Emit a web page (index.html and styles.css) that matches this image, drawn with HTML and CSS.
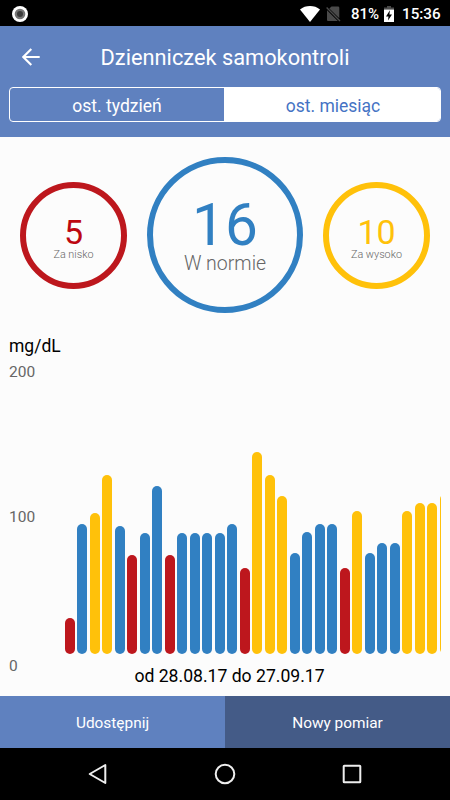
FILE: index.html
```
<!DOCTYPE html>
<html lang="pl">
<head>
    <meta charset="UTF-8">
    <meta name="viewport" content="width=device-width, initial-scale=1.0">
    <title>Dzienniczek samokontroli</title>
    <link rel="stylesheet" href="styles.css">
</head>
<body>
    <!-- Status bar -->
    <div class="status-bar">
        <svg class="status-dot" width="16" height="16" viewBox="0 0 16 16">
            <circle cx="8" cy="8" r="8" fill="#fff"/>
            <circle cx="8" cy="8" r="5.3" fill="#777"/>
            <circle cx="8" cy="8" r="3" fill="#3c3c3c"/>
        </svg>
        <svg class="wifi" width="20" height="16" viewBox="0 0 20 16">
            <path d="M0 3.4C5.6-1.1 14.4-1.1 20 3.4L10 16z" fill="#fff"/>
        </svg>
        <svg class="no-sim" width="15" height="16" viewBox="0 0 15 16">
            <path d="M5.5 .5H12a1.3 1.3 0 0 1 1.3 1.3v10.4L3.3 2.600zM1 4.200L11.800 15H2a1 1 0 0 1-1-1z" fill="#4a4a4a"/>
            <path d="M.6 1.600L14 15" stroke="#4a4a4a" stroke-width="1.400"/>
        </svg>
        <span class="percent">81%</span>
        <svg class="battery" width="10" height="16" viewBox="0 0 10 16">
            <path d="M3 0h4v1.500h3V4H0V1.500h3z" fill="#4a4a4a"/>
            <path d="M0 3.600h10V16H0z" fill="#fff"/>
            <path d="M5.900 4.300L2 10.400h2.500L4 14.600l4-6.100H5.400z" fill="#000"/>
        </svg>
        <span class="clock">15:36</span>
    </div>

    <!-- Header with period switch -->
    <div class="header">
        <div class="title-row">
            <svg class="back" width="18" height="18" viewBox="0 0 18 18">
                <path d="M17.700 9H1.300M9.300 1L1.300 9l8 8" fill="none" stroke="#fff" stroke-width="2.100"/>
            </svg>
            <h1>Dzienniczek samokontroli</h1>
        </div>
        <div class="tabs">
            <div class="tab">ost. tydzień</div>
            <div class="tab active">ost. miesiąc</div>
        </div>
    </div>

    <!-- Summary circles -->
    <div class="summary">
        <div class="circle low">
            <span class="number">5</span>
            <span class="label">Za nisko</span>
        </div>
        <div class="circle normal">
            <span class="number">16</span>
            <span class="label">W normie</span>
        </div>
        <div class="circle high">
            <span class="number">10</span>
            <span class="label">Za wysoko</span>
        </div>
    </div>

    <!-- Chart -->
    <div class="chart">
        <div class="unit">mg/dL</div>
        <div class="plot">
            <div class="axis">
                <span>200</span>
                <span>100</span>
                <span>0</span>
            </div>
            <div class="bars" id="bars"></div>
        </div>
        <div class="range">od 28.08.17 do 27.09.17</div>
    </div>

    <!-- Actions -->
    <div class="actions">
        <div class="action share">Udostępnij</div>
        <div class="action add">Nowy pomiar</div>
    </div>

    <div class="nav-bar">
        <svg width="20" height="22" viewBox="0 0 20 22">
            <path d="M17.300 2v18L1.700 11z" fill="none" stroke="#eee" stroke-width="2" stroke-linejoin="round"/>
        </svg>
        <svg width="22" height="22" viewBox="0 0 22 22">
            <circle cx="11" cy="11" r="9.300" fill="none" stroke="#eee" stroke-width="2"/>
        </svg>
        <svg width="20" height="22" viewBox="0 0 20 22">
            <rect x="1.700" y="2.700" width="16.600" height="16.600" rx=".6" fill="none" stroke="#eee" stroke-width="2"/>
        </svg>
    </div>

    <script>
        // Bar height in px and level for each day
        const days = [
            [36, 'low'], [130, 'normal'], [141.5, 'high'], [179, 'high'], [128, 'normal'],
            [99, 'low'], [121, 'normal'], [168.5, 'normal'], [99, 'low'], [121, 'normal'],
            [121, 'normal'], [121, 'normal'], [121, 'normal'], [130, 'normal'], [86.5, 'low'],
            [202, 'high'], [179, 'high'], [158.5, 'high'], [101, 'normal'], [122.5, 'normal'],
            [130, 'normal'], [130, 'normal'], [86.5, 'low'], [143, 'high'], [101, 'normal'],
            [111, 'normal'], [111, 'normal'], [143, 'high'], [151.5, 'high'], [151.5, 'high'],
            [160, 'high']
        ];
        const bars = document.getElementById('bars');

        days.forEach(([height, level]) => {
            const bar = document.createElement('div');
            bar.className = 'bar ' + level;
            bar.style.height = height + 'px';
            bars.appendChild(bar);
        });
    </script>
</body>
</html>
```

FILE: styles.css
```
* {
    box-sizing: border-box;
}

body {
    margin: 0;
    width: 450px;
    height: 800px;
    display: flex;
    flex-direction: column;
    overflow: hidden;
    background: #fcfcfc;
    font-family: Roboto, "Liberation Sans", sans-serif;
}

svg {
    display: block;
    flex: none;
}

/* Status bar */
.status-bar {
    height: 26px;
    flex: none;
    display: flex;
    align-items: center;
    padding: 1px 9px 0 12px;
    background: #000;
    color: #fff;
    font-size: 15.2px;
    font-weight: 500;
}

.wifi {
    margin-left: auto;
}

.no-sim {
    margin-left: 6px;
}

.percent {
    width: 29px;
    margin-left: 10px;
    font-size: 15px;
}

.battery {
    margin-left: 4px;
}

.clock {
    width: 39px;
    margin-left: 8px;
    white-space: nowrap;
}

/* Header */
.header {
    height: 111px;
    flex: none;
    padding: 0 9px;
    background: #5f81bf;
    color: #fff;
}

.title-row {
    height: 61px;
    display: flex;
    align-items: center;
    padding: 1px 0 0 13px;
}

.title-row h1 {
    flex: 1;
    margin: 0 31px 0 0;
    padding-top: 1px;
    font-size: 21.8px;
    font-weight: 400;
    text-align: center;
    white-space: nowrap;
}

.tabs {
    height: 35px;
    display: flex;
    border: 1px solid #fff;
    border-radius: 4px;
    overflow: hidden;
}

.tab {
    width: 214px;
    font-size: 17.5px;
    line-height: 36px;
    text-align: center;
}

.tab.active {
    flex: 1;
    padding-left: 2px;
    background: #fff;
    color: #4573c4;
}

/* Summary circles */
.summary {
    height: 196px;
    flex: none;
    display: flex;
    align-items: center;
    justify-content: space-between;
    padding: 0 20px;
}

.circle {
    width: 107px;
    height: 107px;
    display: flex;
    flex-direction: column;
    align-items: center;
    border: 6.5px solid;
    border-radius: 50%;
    padding-top: 28px;
}

.circle .number {
    font-size: 34px;
    line-height: 32px;
}

.circle .label {
    color: #666;
    font-size: 10.8px;
    font-weight: 300;
    line-height: 14px;
}

.circle.low {
    border-color: #bd171d;
    color: #bd0711;
}

.circle.high {
    border-color: #ffc10a;
    color: #ffc10a;
}

.circle.normal {
    width: 156px;
    height: 156px;
    padding-top: 34px;
    border-color: #3180c2;
    color: #3180c2;
}

.circle.normal .number {
    font-size: 58.5px;
    line-height: 56px;
}

.circle.normal .label {
    font-size: 19.5px;
    line-height: 22px;
}

/* Chart */
.chart {
    flex: 1;
    padding: 0 9px;
}

.unit {
    height: 30px;
    padding-top: 2px;
    font-size: 17.5px;
    line-height: 22px;
}

.plot {
    height: 291px;
    display: flex;
}

.axis {
    width: 55.5px;
    height: 312px;
    flex: none;
    display: grid;
    grid-template-rows: 145px 149px 18px;
    color: #666;
    font-size: 15.5px;
    line-height: 18px;
}

.bars {
    flex: 1;
    display: flex;
    align-items: flex-end;
    gap: 2.5px;
    overflow: hidden;
}

.bar {
    width: 10px;
    flex: none;
    border-radius: 5px;
}

.bar.low {
    background: #bd171d;
}

.bar.normal {
    background: #3180c2;
}

.bar.high {
    background: #ffc10a;
}

.range {
    padding: 11px 0 0 9px;
    font-size: 17.6px;
    line-height: 22px;
    text-align: center;
}

/* Bottom buttons */
.actions {
    height: 52px;
    flex: none;
    display: flex;
}

.action {
    flex: 1;
    color: #fff;
    font-size: 15.4px;
    line-height: 54px;
    text-align: center;
}

.share {
    background: #5f81bf;
}

.add {
    background: #445b87;
}

.nav-bar {
    height: 52px;
    flex: none;
    display: flex;
    align-items: center;
    justify-content: space-between;
    padding: 0 88px;
    background: #000;
}
```
